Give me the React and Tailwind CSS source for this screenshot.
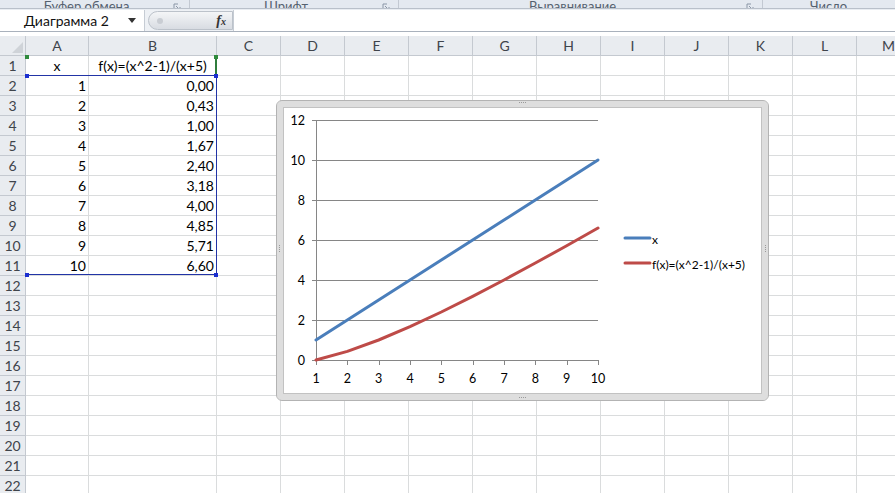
import React from "react";

const COLS = ["A", "B", "C", "D", "E", "F", "G", "H", "I", "J", "K", "L", "M"];
const ROWS = 22;

const DATA = [
  [1, "0,00"],
  [2, "0,43"],
  [3, "1,00"],
  [4, "1,67"],
  [5, "2,40"],
  [6, "3,18"],
  [7, "4,00"],
  [8, "4,85"],
  [9, "5,71"],
  [10, "6,60"],
];

const FX = [0, 0.43, 1, 1.67, 2.4, 3.18, 4, 4.85, 5.71, 6.6];

const GROUPS = [
  { label: "Буфер обмена", w: "w-[190px]", launcher: true },
  { label: "Шрифт", w: "w-[209px]", launcher: true },
  { label: "Выравнивание", w: "w-[364px]", launcher: true },
  { label: "Число", w: "w-[140px]", launcher: false },
];

const font = { fontFamily: "Lato, 'Open Sans', sans-serif" };

function Launcher() {
  return (
    <svg width="8" height="8" viewBox="0 0 8 8" className="shrink-0">
      <path d="M1 1h4M1 1v4" stroke="#8a96a6" strokeWidth="1" fill="none" />
      <path d="M3 3l4 4M7 4v3H4" stroke="#8a96a6" strokeWidth="1" fill="none" />
    </svg>
  );
}

// bottom edge of the ribbon: group captions, mostly scrolled out of view
function RibbonLabels() {
  return (
    <div className="flex h-[9px] overflow-hidden bg-[#e4e9f0] border-b border-[#b9c0ca]">
      {GROUPS.map((g) => (
        <div key={g.label} className={`${g.w} shrink-0 flex items-end border-r border-[#c3c9d2] pr-2`}>
          <span className="flex-1 text-center text-[13px] leading-[13px] text-[#55616f] mb-[-5px]">
            {g.label}
          </span>
          {g.launcher && (
            <div className="mb-[-3px]">
              <Launcher />
            </div>
          )}
        </div>
      ))}
    </div>
  );
}

function FormulaBar() {
  return (
    <div className="flex h-[22px] bg-[#eef1f5] border-b border-[#a9b1bc]">
      <div className="w-[145px] bg-white flex items-center pl-6 pr-2 border-r border-[#c6ccd4]">
        <span className="flex-1 text-[14px] text-[#111]">Диаграмма 2</span>
        <svg width="8" height="5" viewBox="0 0 8 5">
          <path d="M0 0h8L4 5z" fill="#333" />
        </svg>
      </div>
      <div className="ml-[3px] my-[1px] w-[85px] rounded-l-full bg-gradient-to-b from-[#f4f5f7] to-[#d8dce2] border border-[#bcc2ca] flex items-center pl-[8px] pr-[6px]">
        <div className="w-[6px] h-[6px] rounded-full bg-[#c9cdd3]" />
        <span className="ml-auto text-[14px] italic font-bold text-[#333] font-['Liberation_Serif',serif]">
          f<span className="text-[10px]">x</span>
        </span>
      </div>
      <div className="flex-1 bg-white border-l border-[#c6ccd4]" />
    </div>
  );
}

function HeaderCell({ children }) {
  return (
    <div className="h-5 flex items-center justify-center bg-[#e9ecf0] border-r border-b border-[#c4c9d0] text-[14px] text-[#3f444b]">
      {children}
    </div>
  );
}

function Cell({ children, align = "right" }) {
  const a = align === "center" ? "justify-center" : "justify-end pr-[2px]";
  return (
    <div className={`h-5 flex items-center ${a} bg-white border-r border-b border-[#dadcdd] text-[14px] text-black overflow-hidden whitespace-nowrap`}>
      {children}
    </div>
  );
}

function cellValue(r, i) {
  if (r === 1 && i === 0) return ["x", "center"];
  if (r === 1 && i === 1) return ["f(x)=(x^2-1)/(x+5)", "center"];
  if (r >= 2 && r <= 11 && i < 2) return [DATA[r - 2][i], "right"];
  return [null, "right"];
}

function Handle({ className }) {
  return <div className={`absolute w-[4px] h-[4px] ${className}`} />;
}

// coloured outline of the chart's source range: names in green, values in blue
function RangeHighlight() {
  return (
    <div className="absolute left-[26px] top-[20px] w-[191px] h-[219px]">
      <div className="absolute right-0 top-0 w-[2px] h-[20px] bg-[#2f7d3c]" />
      <div className="absolute inset-x-0 top-[19px] bottom-0 border-t border-r border-b border-[#2234a6]" />
      <Handle className="-left-[1px] -top-[1px] bg-[#2f8a3c]" />
      <Handle className="-right-[1px] -top-[1px] bg-[#2f8a3c]" />
      <Handle className="-left-[1px] top-[18px] bg-[#1b2fd0]" />
      <Handle className="-right-[1px] top-[18px] bg-[#1b2fd0]" />
      <Handle className="-left-[1px] -bottom-[2px] bg-[#1b2fd0]" />
      <Handle className="-right-[1px] -bottom-[2px] bg-[#1b2fd0]" />
    </div>
  );
}

function Sheet() {
  const rows = [];
  for (let r = 1; r <= ROWS; r++) {
    rows.push(<HeaderCell key={`h${r}`}>{r}</HeaderCell>);
    COLS.forEach((c, i) => {
      const [content, align] = cellValue(r, i);
      rows.push(
        <Cell key={`${c}${r}`} align={align}>
          {content}
        </Cell>
      );
    });
  }

  return (
    <div className="relative mt-[4px]">
      <div className="grid grid-cols-[26px_63px_128px_repeat(11,64px)]">
        <div className="h-5 bg-[#e9ecf0] border-r border-b border-[#c4c9d0] flex items-end justify-end p-[2px]">
          <svg width="11" height="11" viewBox="0 0 11 11">
            <path d="M11 0v11H0z" fill="#cfd3d8" />
          </svg>
        </div>
        {COLS.map((c) => (
          <HeaderCell key={c}>{c}</HeaderCell>
        ))}
        {rows}
      </div>
      <RangeHighlight />
      <Chart />
    </div>
  );
}

const px = (i) => 33 + i * (282 / 9);
const py = (v) => 253 - v * 20;

function Grip({ className, vertical }) {
  return (
    <div className={`absolute flex ${vertical ? "flex-col" : "flex-row"} gap-[1px] ${className}`}>
      {[0, 1, 2, 3].map((i) => (
        <div key={i} className="w-[1px] h-[1px] bg-[#9a9a9a]" />
      ))}
    </div>
  );
}

function Chart() {
  const xLine = Array.from({ length: 10 }, (_, i) => `${px(i)},${py(i + 1)}`).join(" ");
  const fLine = FX.map((v, i) => `${px(i)},${py(v)}`).join(" ");

  return (
    <div className="absolute left-[277px] top-[65px] w-[491px] h-[299px] rounded-[5px] border-[6px] border-[#dedede] outline outline-1 outline-[#b3b3b3] bg-white shadow-[inset_0_0_0_1px_#c2c2c2]">
      <svg width="479" height="287" className="block" style={font}>
        {[0, 2, 4, 6, 8, 10, 12].map((v) => (
          <g key={v}>
            <line x1={29} x2={315} y1={py(v) + 0.5} y2={py(v) + 0.5} stroke="#868686" strokeWidth="1" />
            <text x={22} y={py(v)} textAnchor="end" dominantBaseline="central" fontSize="12.5" fill="#000">
              {v}
            </text>
          </g>
        ))}
        <line x1={33.5} x2={33.5} y1={py(12)} y2={py(0)} stroke="#868686" strokeWidth="1" />
        {Array.from({ length: 10 }, (_, i) => (
          <g key={i}>
            <line x1={Math.round(px(i)) + 0.5} x2={Math.round(px(i)) + 0.5} y1={253} y2={258} stroke="#868686" strokeWidth="1" />
            <text x={px(i)} y={271} textAnchor="middle" dominantBaseline="central" fontSize="12.5" fill="#000">
              {i + 1}
            </text>
          </g>
        ))}
        <polyline points={xLine} fill="none" stroke="#4a7ebb" strokeWidth="3" strokeLinejoin="round" strokeLinecap="round" />
        <polyline points={fLine} fill="none" stroke="#be4b48" strokeWidth="3" strokeLinejoin="round" strokeLinecap="round" />

        <line x1={342} x2={367} y1={131} y2={131} stroke="#4a7ebb" strokeWidth="3" strokeLinecap="round" />
        <text x={369} y={132} dominantBaseline="central" fontSize="12" fill="#000">
          x
        </text>
        <line x1={342} x2={367} y1={156} y2={156} stroke="#be4b48" strokeWidth="3" strokeLinecap="round" />
        <text x={369} y={157} dominantBaseline="central" fontSize="12" fill="#000">
          f(x)=(x^2-1)/(x+5)
        </text>
      </svg>
      <Grip className="top-[-5px] left-[236px]" />
      <Grip className="bottom-[-4px] left-[236px]" />
      <Grip vertical className="left-[-4px] top-[138px]" />
      <Grip vertical className="right-[-4px] top-[138px]" />
    </div>
  );
}

export default function App() {
  return (
    <div className="w-[895px] h-[493px] overflow-hidden bg-white" style={font}>
      <RibbonLabels />
      <div className="h-[1px] bg-[#e9edf2]" />
      <FormulaBar />
      <Sheet />
    </div>
  );
}
